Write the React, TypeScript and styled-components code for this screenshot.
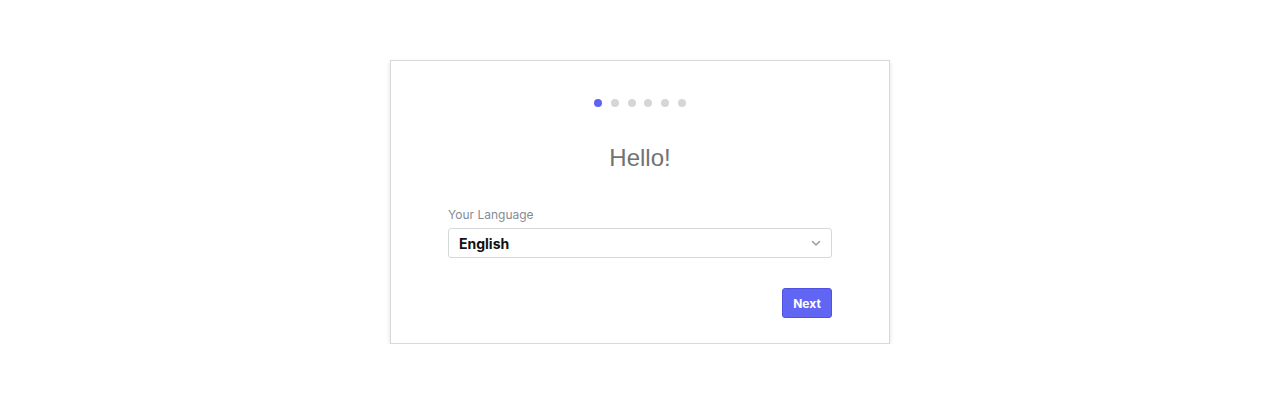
import React from "react";
import styled, { createGlobalStyle } from "styled-components";

const Global = createGlobalStyle`
  html, body { margin: 0; padding: 0; background: #ffffff; }
  body { font-family: Inter, "Noto Sans", sans-serif; }
  * { box-sizing: border-box; }
`;

const Page = styled.div`
  display: flex;
  justify-content: center;
  padding-top: 60px;
`;

const Card = styled.div`
  width: 500px;
  height: 284px;
  border: 1px solid #d9d9d9;
  background: #fff;
  box-shadow: 0 2px 5px rgba(0, 0, 0, 0.12);
  display: flex;
  flex-direction: column;
  align-items: center;
  padding-top: 38px;
`;

const Dots = styled.div`
  display: flex;
  gap: 8.8px;
`;

const Dot = styled.span<{ $active?: boolean }>`
  width: 8px;
  height: 8px;
  border-radius: 50%;
  background: ${(p) => (p.$active ? "#5f63f2" : "#d4d6d9")};
`;

const Title = styled.h1`
  margin: 37px 0 0;
  font-family: "Liberation Sans", Arial, sans-serif;
  font-weight: 400;
  font-size: 24px;
  line-height: 28px;
  color: #727272;
`;

const Form = styled.div`
  width: 384px;
  margin-top: 35px;
  display: flex;
  flex-direction: column;
`;

const Label = styled.label`
  font-size: 12px;
  line-height: 16px;
  color: #858b96;
  margin-bottom: 5px;
`;

const Select = styled.div`
  height: 30px;
  border: 1px solid #d6d8dc;
  border-radius: 3px;
  display: flex;
  align-items: center;
  justify-content: space-between;
  padding: 0 9px 0 10px;
  font-size: 14px;
  font-weight: 700;
  color: #111;
`;

const Footer = styled.div`
  display: flex;
  justify-content: flex-end;
  margin-top: 30px;
`;

const Button = styled.button`
  width: 50px;
  height: 30px;
  border: 1px solid #4f53e0;
  border-radius: 3px;
  background: #6065f4;
  color: #fff;
  font-family: Inter, "Noto Sans", sans-serif;
  font-weight: 700;
  font-size: 12px;
  padding: 0;
  cursor: pointer;
`;

export default function App() {
  return (
    <>
      <Global />
      <Page>
        <Card>
          <Dots>
            {[0, 1, 2, 3, 4, 5].map((i) => (
              <Dot key={i} $active={i === 0} />
            ))}
          </Dots>
          <Title>Hello!</Title>
          <Form>
            <Label>Your Language</Label>
            <Select>
              <span>English</span>
              <svg width="12" height="12" viewBox="0 0 12 12" fill="none">
                <path d="M2.5 4.5 L6 8 L9.5 4.5" stroke="#9aa0a8" strokeWidth="1.6" strokeLinecap="round" strokeLinejoin="round" />
              </svg>
            </Select>
            <Footer>
              <Button>Next</Button>
            </Footer>
          </Form>
        </Card>
      </Page>
    </>
  );
}
